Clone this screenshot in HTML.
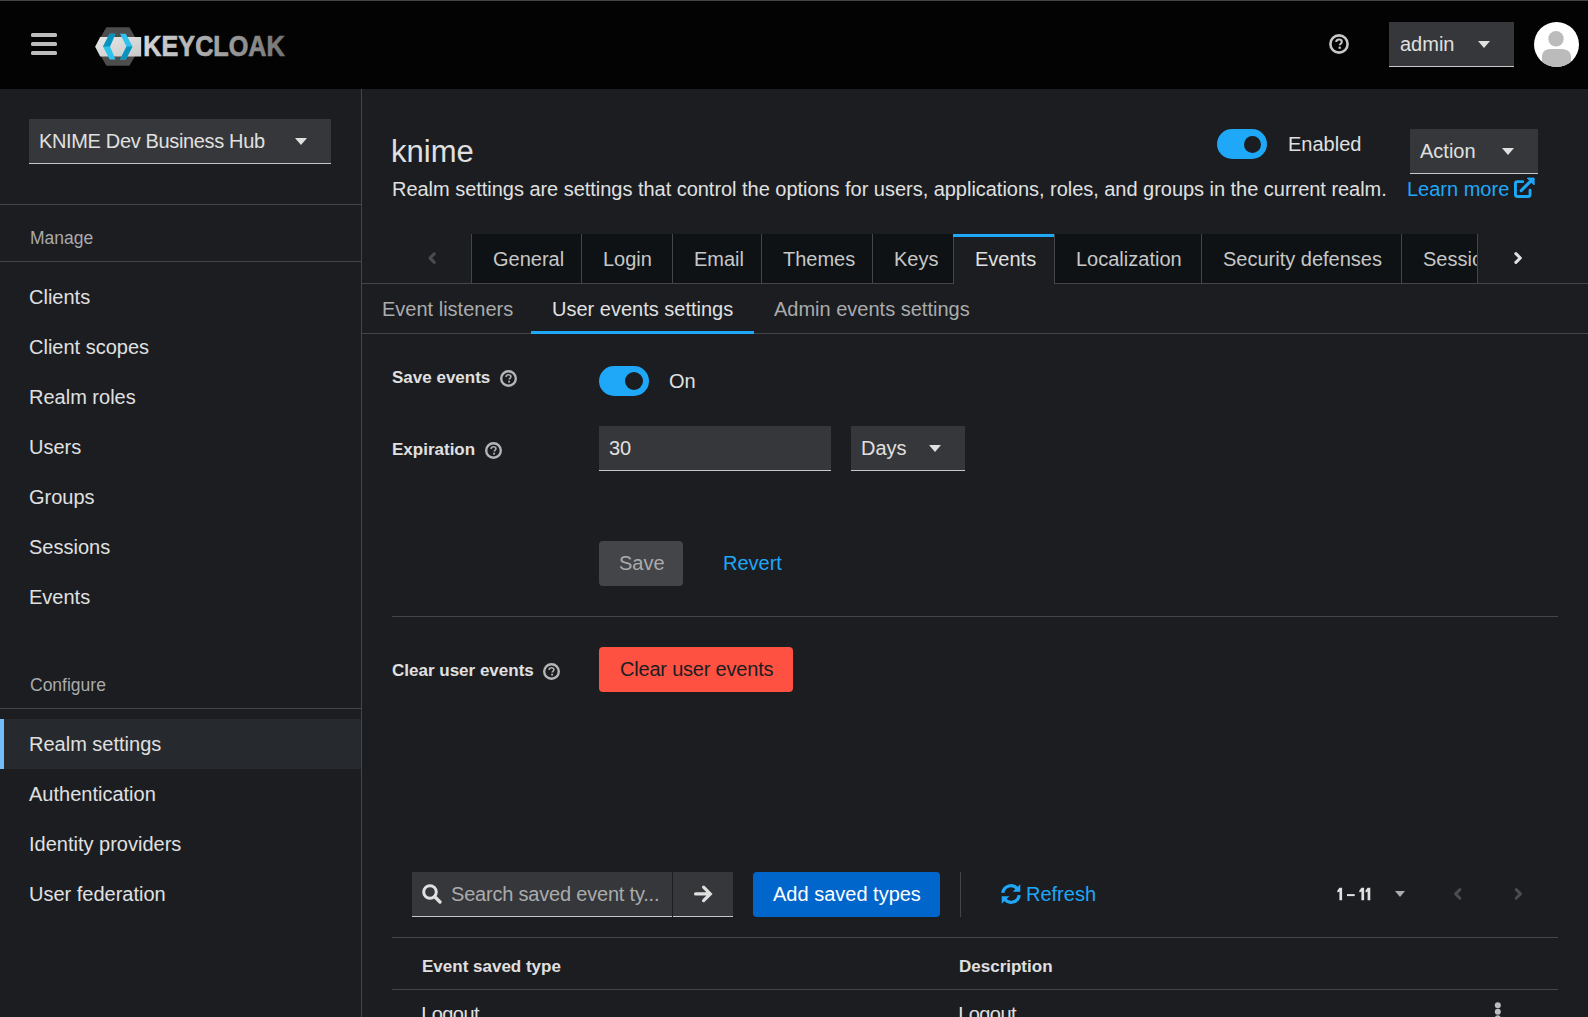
<!DOCTYPE html>
<html><head><meta charset="utf-8">
<style>
*{box-sizing:border-box;margin:0;padding:0}
html,body{width:1588px;height:1017px;overflow:hidden;background:#1b1d21;font-family:"Liberation Sans",sans-serif;color:#e0e0e0}
.a{position:absolute;white-space:nowrap}
.t{position:absolute;white-space:nowrap;font-size:20px;line-height:30px;height:30px}
#mast{position:absolute;left:0;top:0;width:1588px;height:89px;background:#030303}
#topline{position:absolute;left:0;top:0;width:1588px;height:1px;background:#454545}
#side{position:absolute;left:0;top:89px;width:361px;height:928px;background:#1b1d21;border-right:1px solid #444548;width:362px}
.hr{position:absolute;height:1px;background:#444548}
.sel{position:absolute;background:#36373a;border-bottom:1px solid #c7c7c7}
.caret{position:absolute;width:0;height:0;border-left:6px solid transparent;border-right:6px solid transparent;border-top:7px solid #e0e0e0}
.tab{position:absolute;top:234px;height:50px;background:#0f1214;border-left:1px solid #444548;border-bottom:1px solid #444548;font-size:20px;line-height:50px;color:#c7c7c7;padding-left:21px}
.sub{position:absolute;top:294px;font-size:20px;line-height:30px;color:#aaabac}
.lbl{position:absolute;font-size:17px;font-weight:bold;line-height:30px;color:#e0e0e0}
.help{position:absolute}
</style></head><body>
<div id="mast"></div>
<div id="topline"></div>
<!-- hamburger -->
<div class="a" style="left:31px;top:33px;width:26px;height:4px;background:#bdbdbd;border-radius:1.5px"></div>
<div class="a" style="left:31px;top:42px;width:26px;height:4px;background:#bdbdbd;border-radius:1.5px"></div>
<div class="a" style="left:31px;top:51px;width:26px;height:4px;background:#bdbdbd;border-radius:1.5px"></div>
<!-- logo -->
<svg class="a" style="left:90px;top:20px" width="200" height="52" viewBox="90 20 200 52">
  <defs>
    <linearGradient id="lg" x1="0" x2="1" y1="0" y2="0">
      <stop offset="0" stop-color="#d6d6d6"/><stop offset="1" stop-color="#747474"/>
    </linearGradient>
    <linearGradient id="bar" x1="0" x2="1" y1="0" y2="1">
      <stop offset="0" stop-color="#e8e8e8"/><stop offset="1" stop-color="#c8c8c8"/>
    </linearGradient>
  </defs>
  <polygon points="106.4,27.2 129.4,27.2 140.5,46.5 129.4,65.8 106.4,65.8 95.3,46.5" fill="#4d4d4d"/>
  <polygon points="100.2,37.1 141.2,37.1 141.2,56.6 100.2,56.6 95.2,46.8" fill="url(#bar)"/>
  <polygon points="109.7,33.8 115.5,33.8 110,46.6 115.5,59.6 109.7,59.6 103,46.6" fill="#2ec3ec"/>
  <polygon points="109.7,33.8 115.5,33.8 110,46.6 103,46.6" fill="#0a93bd"/>
  <polygon points="120,33.8 125.8,33.8 132.5,46.6 125.8,59.6 120,59.6 126.5,46.6" fill="#2ec3ec"/>
  <polygon points="120,59.6 125.8,59.6 132.5,46.6 126.5,46.6" fill="#0a93bd"/>
  <text x="143.3" y="56.3" font-family="Liberation Sans" font-weight="bold" font-size="29" textLength="141.5" lengthAdjust="spacingAndGlyphs" fill="url(#lg)" stroke="url(#lg)" stroke-width="0.7">KEYCLOAK</text>
</svg>
<!-- help icon masthead -->
<svg class="a" style="left:1329px;top:34px" width="20" height="20" viewBox="0 0 20 20">
  <circle cx="10" cy="10" r="8.6" fill="none" stroke="#c7c7c7" stroke-width="2.6"/>
  <path d="M7.2 8.1 C7.2 6.3 8.5 5.6 10 5.6 C11.6 5.6 12.8 6.5 12.8 7.9 C12.8 9.6 10.8 9.8 10.8 11.3" fill="none" stroke="#c7c7c7" stroke-width="2"/>
  <rect x="9.6" y="12.6" width="2.2" height="2.2" fill="#c7c7c7"/>
</svg>
<!-- admin dropdown -->
<div class="sel" style="left:1389px;top:22px;width:125px;height:45px"></div>
<div class="t" style="left:1400px;top:29px">admin</div>
<div class="caret" style="left:1478px;top:41px"></div>
<!-- avatar -->
<svg class="a" style="left:1534px;top:22px" width="45" height="45" viewBox="0 0 45 45">
  <defs><clipPath id="cc"><circle cx="22.5" cy="22.5" r="22.5"/></clipPath></defs>
  <circle cx="22.5" cy="22.5" r="22.5" fill="#fff"/>
  <g clip-path="url(#cc)">
    <circle cx="22" cy="16.8" r="7.7" fill="#bbbbbb"/>
    <path d="M8 45 L8 35 C8 29 12 27 17 27 L27 27 C32 27 37 29 37 35 L37 45 Z" fill="#bbbbbb"/>
  </g>
</svg>

<!-- sidebar -->
<div id="side"></div>
<div class="sel" style="left:29px;top:119px;width:302px;height:45px"></div>
<div class="t" style="left:39px;top:126px;letter-spacing:-0.35px">KNIME Dev Business Hub</div>
<div class="caret" style="left:295px;top:138px"></div>
<div class="hr" style="left:0;top:204px;width:361px"></div>
<div class="t" style="left:30px;top:223px;font-size:17.5px;color:#aaabac">Manage</div>
<div class="hr" style="left:0;top:261px;width:361px"></div>
<div class="t" style="left:29px;top:282px">Clients</div>
<div class="t" style="left:29px;top:332px">Client scopes</div>
<div class="t" style="left:29px;top:382px">Realm roles</div>
<div class="t" style="left:29px;top:432px">Users</div>
<div class="t" style="left:29px;top:482px">Groups</div>
<div class="t" style="left:29px;top:532px">Sessions</div>
<div class="t" style="left:29px;top:582px">Events</div>
<div class="t" style="left:30px;top:670px;font-size:17.5px;color:#aaabac">Configure</div>
<div class="hr" style="left:0;top:708px;width:361px"></div>
<div class="a" style="left:0;top:719px;width:361px;height:50px;background:#26292d"></div>
<div class="a" style="left:0;top:719px;width:4px;height:50px;background:#73bcf7"></div>
<div class="t" style="left:29px;top:729px">Realm settings</div>
<div class="t" style="left:29px;top:779px">Authentication</div>
<div class="t" style="left:29px;top:829px">Identity providers</div>
<div class="t" style="left:29px;top:879px">User federation</div>

<!-- main header -->
<div class="a" style="left:391px;top:131.7px;font-size:31px;line-height:40px">knime</div>
<div class="t" style="left:392px;top:174px;letter-spacing:-0.03px">Realm settings are settings that control the options for users, applications, roles, and groups in the current realm.</div>
<div class="t" style="left:1407px;top:174px;color:#1fa7f8">Learn more</div>
<svg class="a" style="left:1510px;top:174px" width="28" height="28" viewBox="1510 174 28 28">
  <path d="M1522.7,181.65 H1517.4 Q1515.45,181.65 1515.45,183.6 V194.5 Q1515.45,196.45 1517.4,196.45 H1528.1 Q1530.05,196.45 1530.05,194.5 V190.3" fill="none" stroke="#1fa7f8" stroke-width="2.9" stroke-linecap="round"/>
  <path d="M1521.2,190.6 L1530.5,181.3" stroke="#1fa7f8" stroke-width="3.1" stroke-linecap="round"/>
  <path d="M1527.3,178.1 H1534.1 V184.9 Z" fill="#1fa7f8" stroke="#1fa7f8" stroke-width="1" stroke-linejoin="round"/>
</svg>
<!-- enabled toggle -->
<div class="a" style="left:1217px;top:129px;width:50px;height:30px;border-radius:15px;background:#1fa7f8"></div>
<div class="a" style="left:1244px;top:135.5px;width:17px;height:17px;border-radius:9px;background:#1b1d21"></div>
<div class="t" style="left:1288px;top:129px">Enabled</div>
<div class="sel" style="left:1410px;top:129px;width:128px;height:45px"></div>
<div class="t" style="left:1420px;top:136px">Action</div>
<div class="caret" style="left:1502px;top:148px"></div>

<!-- tabs -->
<div class="hr" style="left:362px;top:283px;width:1226px"></div>
<div class="a" style="left:362px;top:234px;width:109px;height:49px"></div>
<svg class="a" style="left:420px;top:246px" width="24" height="24" viewBox="420 246 24 24"><path d="M434.3,253.8 L430,258.1 L434.3,262.4" fill="none" stroke="#4a4c50" stroke-width="3" stroke-linecap="round" stroke-linejoin="round"/></svg>
<div class="tab" style="left:471px;width:110px">General</div>
<div class="tab" style="left:581px;width:91px">Login</div>
<div class="tab" style="left:672px;width:89px">Email</div>
<div class="tab" style="left:761px;width:111px">Themes</div>
<div class="tab" style="left:872px;width:81px">Keys</div>
<div class="tab" style="left:953px;width:101px;background:#1b1d21;border-bottom:none;color:#e0e0e0;height:50px">Events</div>
<div class="a" style="left:953px;top:234px;width:101px;height:3px;background:#1fa7f8"></div>
<div class="tab" style="left:1054px;width:147px">Localization</div>
<div class="tab" style="left:1201px;width:200px">Security defenses</div>
<div class="tab" style="left:1401px;width:77px;overflow:hidden;border-right:1px solid #444548">Sessions</div>
<svg class="a" style="left:1506px;top:246px" width="24" height="24" viewBox="1506 246 24 24"><path d="M1515.9,253.7 L1520.3,258 L1515.9,262.3" fill="none" stroke="#e0e0e0" stroke-width="3.1" stroke-linecap="round" stroke-linejoin="round"/></svg>

<!-- sub tabs -->
<div class="hr" style="left:362px;top:333px;width:1226px"></div>
<div class="sub" style="left:382px">Event listeners</div>
<div class="sub" style="left:552px;color:#e0e0e0">User events settings</div>
<div class="a" style="left:531px;top:331px;width:223px;height:3px;background:#1fa7f8"></div>
<div class="sub" style="left:774px">Admin events settings</div>

<!-- form -->
<div class="lbl" style="left:392px;top:363px">Save events</div>
<svg class="help" style="left:500px;top:370px" width="17" height="17" viewBox="0 0 20 20">
  <circle cx="10" cy="10" r="8.6" fill="none" stroke="#b4b5b6" stroke-width="2.8"/>
  <path d="M7.2 8.1 C7.2 6.3 8.5 5.6 10 5.6 C11.6 5.6 12.8 6.5 12.8 7.9 C12.8 9.6 10.8 9.8 10.8 11.3" fill="none" stroke="#aaabac" stroke-width="2"/>
  <rect x="9.6" y="12.6" width="2.2" height="2.2" fill="#aaabac"/>
</svg>
<div class="a" style="left:599px;top:366px;width:50px;height:30px;border-radius:15px;background:#1fa7f8"></div>
<div class="a" style="left:625.25px;top:372.25px;width:17.5px;height:17.5px;border-radius:9px;background:#1b1d21"></div>
<div class="t" style="left:669px;top:366px">On</div>

<div class="lbl" style="left:392px;top:435px">Expiration</div>
<svg class="help" style="left:485px;top:442px" width="17" height="17" viewBox="0 0 20 20">
  <circle cx="10" cy="10" r="8.6" fill="none" stroke="#b4b5b6" stroke-width="2.8"/>
  <path d="M7.2 8.1 C7.2 6.3 8.5 5.6 10 5.6 C11.6 5.6 12.8 6.5 12.8 7.9 C12.8 9.6 10.8 9.8 10.8 11.3" fill="none" stroke="#aaabac" stroke-width="2"/>
  <rect x="9.6" y="12.6" width="2.2" height="2.2" fill="#aaabac"/>
</svg>
<div class="sel" style="left:599px;top:426px;width:232px;height:45px"></div>
<div class="t" style="left:609px;top:433px">30</div>
<div class="sel" style="left:851px;top:426px;width:114px;height:45px"></div>
<div class="t" style="left:861px;top:433px">Days</div>
<div class="caret" style="left:929px;top:445px"></div>

<div class="a" style="left:599px;top:541px;width:84px;height:45px;background:#444548;border-radius:4px"></div>
<div class="t" style="left:619px;top:548px;color:#aaabac">Save</div>
<div class="t" style="left:723px;top:548px;color:#1fa7f8">Revert</div>
<div class="hr" style="left:392px;top:616px;width:1166px"></div>

<div class="lbl" style="left:392px;top:656px">Clear user events</div>
<svg class="help" style="left:543px;top:663px" width="17" height="17" viewBox="0 0 20 20">
  <circle cx="10" cy="10" r="8.6" fill="none" stroke="#b4b5b6" stroke-width="2.8"/>
  <path d="M7.2 8.1 C7.2 6.3 8.5 5.6 10 5.6 C11.6 5.6 12.8 6.5 12.8 7.9 C12.8 9.6 10.8 9.8 10.8 11.3" fill="none" stroke="#aaabac" stroke-width="2"/>
  <rect x="9.6" y="12.6" width="2.2" height="2.2" fill="#aaabac"/>
</svg>
<div class="a" style="left:599px;top:647px;width:194px;height:45px;background:#fe5142;border-radius:4px"></div>
<div class="t" style="left:620px;top:654px;color:#1b1d21;letter-spacing:-0.2px">Clear user events</div>

<!-- toolbar -->
<div class="sel" style="left:412px;top:872px;width:260px;height:45px"></div>
<svg class="a" style="left:421px;top:883px" width="22" height="22" viewBox="0 0 22 22"><circle cx="9" cy="9" r="6.3" fill="none" stroke="#e0e0e0" stroke-width="3"/><path d="M13.5 13.5 L19 19" stroke="#e0e0e0" stroke-width="3.4" stroke-linecap="round"/></svg>
<div class="t" style="left:451px;top:879px;color:#aaabac;letter-spacing:-0.2px">Search saved event ty...</div>
<div class="sel" style="left:673px;top:872px;width:60px;height:45px"></div>
<svg class="a" style="left:686px;top:878px" width="32" height="32" viewBox="686 878 32 32"><path d="M695.6,893.9 H709 M703.6,887.2 L710.3,893.9 L703.6,900.6" fill="none" stroke="#e0e0e0" stroke-width="3.2" stroke-linecap="round" stroke-linejoin="miter"/></svg>
<div class="a" style="left:753px;top:872px;width:187px;height:45px;background:#0066cc;border-radius:4px"></div>
<div class="t" style="left:773px;top:879px;color:#fff">Add saved types</div>
<div class="a" style="left:960px;top:872px;width:1px;height:45px;background:#444548"></div>
<svg class="a" style="left:998.8px;top:882px" width="24" height="24" viewBox="0 0 22 22"><path d="M3.5 10 A7.5 7.5 0 0 1 17 6.5 M18.5 12 A7.5 7.5 0 0 1 5 15.5" fill="none" stroke="#1fa7f8" stroke-width="3"/><path d="M19.5 2 V9 H12.5 Z M2.5 20 V13 H9.5 Z" fill="#1fa7f8"/></svg>
<div class="t" style="left:1026px;top:879px;color:#1fa7f8">Refresh</div>
<svg class="a" style="left:1330px;top:880px" width="50" height="28" viewBox="1330 880 50 28"><path d="M1339.4,887.8 H1342.1 V900.2 H1339.4 V891.6 L1337.7,892.6 L1337.1,890.9 Z" fill="#e0e0e0"/><rect x="1347" y="894.1" width="7.7" height="2" fill="#e0e0e0"/><path d="M1361.4,887.8 H1364.1 V900.2 H1361.4 V891.6 L1359.7,892.6 L1359.1,890.9 Z" fill="#e0e0e0"/><path d="M1367.6,887.8 H1370.3 V900.2 H1367.6 V891.6 L1365.9,892.6 L1365.3,890.9 Z" fill="#e0e0e0"/></svg>
<div class="caret" style="left:1394.5px;top:891.3px;border-left-width:5.3px;border-right-width:5.3px;border-top:6px solid #aaabac"></div>
<svg class="a" style="left:1446px;top:882px" width="24" height="24" viewBox="1446 882 24 24"><path d="M1459.9,889.6 L1455.6,893.9 L1459.9,898.2" fill="none" stroke="#4a4c50" stroke-width="2.9" stroke-linecap="round" stroke-linejoin="round"/></svg>
<svg class="a" style="left:1506px;top:882px" width="24" height="24" viewBox="1506 882 24 24"><path d="M1516.2,889.6 L1520.5,893.9 L1516.2,898.2" fill="none" stroke="#4a4c50" stroke-width="2.9" stroke-linecap="round" stroke-linejoin="round"/></svg>

<!-- table -->
<div class="hr" style="left:392px;top:937px;width:1166px"></div>
<div class="lbl" style="left:422px;top:952px">Event saved type</div>
<div class="lbl" style="left:959px;top:952px">Description</div>
<div class="hr" style="left:392px;top:989px;width:1166px"></div>
<div class="t" style="left:421.3px;top:999px;letter-spacing:-0.6px">Logout</div>
<div class="t" style="left:958.3px;top:999px;letter-spacing:-0.6px">Logout</div>
<svg class="a" style="left:1490px;top:998px" width="16" height="19" viewBox="1490 998 16 19"><circle cx="1497.8" cy="1005.2" r="3" fill="#bcbdbf"/><circle cx="1497.8" cy="1011.7" r="3" fill="#bcbdbf"/><circle cx="1497.8" cy="1018.2" r="3" fill="#bcbdbf"/></svg>

</body></html>
